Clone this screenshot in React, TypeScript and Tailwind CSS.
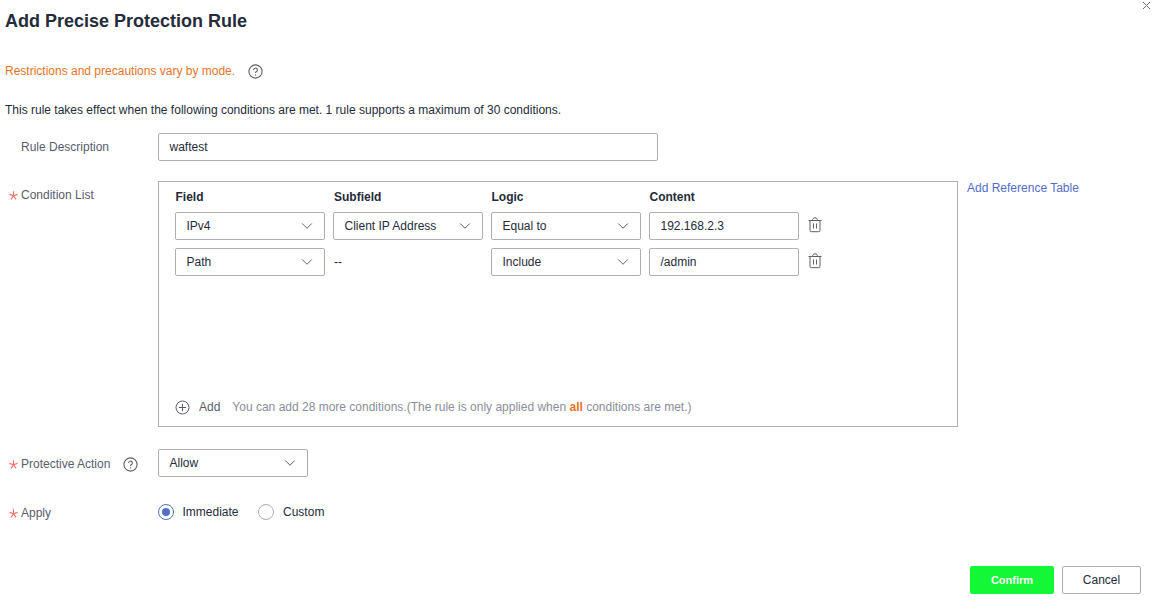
import { ChevronDown } from 'lucide-react';

const fieldBorder = 'border border-[#adb0b8] rounded-[2px] bg-white';

function HelpIcon() {
  return (
    <svg width="15" height="15" viewBox="0 0 15 15" fill="none" className="shrink-0">
      <circle cx="7.5" cy="7.5" r="6.6" stroke="#5e6066" strokeWidth="1.1" />
      <path d="M5.6 6a1.9 1.9 0 1 1 2.9 1.6c-.7.4-1 .7-1 1.4" stroke="#5e6066" strokeWidth="1.1" />
      <circle cx="7.5" cy="10.9" r="0.7" fill="#5e6066" />
    </svg>
  );
}

function TrashIcon() {
  return (
    <svg width="14" height="16" viewBox="0 0 14 16" fill="none" stroke="#5e6066" strokeWidth="1">
      <path d="M.5 3.5h13M4.5 3.5c0-1.6 1-2.7 2.5-2.7s2.500 1.100 2.500 2.700M2 3.500v10a1.200 1.200 0 0 0 1.200 1.200h7.600A1.200 1.200 0 0 0 12 13.500v-10M5.500 6.500v5M8.500 6.500v5" />
    </svg>
  );
}

function Star() {
  return (
    <svg width="9" height="9" viewBox="0 0 8 8" className="mr-[3px] mt-[1px] shrink-0" stroke="#f66f6a" strokeWidth="1">
      <path d="M4 .3V4.300M4 4.300L.4 3M4 4.300L7.600 3M4 4.300L1.700 7.500M4 4.300L6.300 7.500" fill="none" />
    </svg>
  );
}

function Select({ value, width }: { value: string; width: string }) {
  return (
    <div className={`flex h-[28px] items-center justify-between pl-[10.5px] pr-[8px] ${fieldBorder} ${width}`}>
      <span>{value}</span>
      <ChevronDown size={18} strokeWidth={1.2} color="#4d4f55" />
    </div>
  );
}

function ConditionRow({ field, subfield, logic, content }: { field: string; subfield?: string; logic: string; content: string }) {
  return (
    <div className="flex items-center gap-[8px] text-[#252b3a]">
      <Select value={field} width="w-[150px]" />
      {subfield ? (
        <Select value={subfield} width="w-[150px]" />
      ) : (
        <span className="w-[150px] pl-[1px]">--</span>
      )}
      <Select value={logic} width="w-[150px]" />
      <div className={`flex h-[28px] w-[150px] items-center pl-[10.5px] ${fieldBorder}`}>{content}</div>
      <div className="-mt-[3px] ml-[1px] flex">
        <TrashIcon />
      </div>
    </div>
  );
}

export default function App() {
  return (
    <div className="relative h-[600px] w-[1153px] overflow-hidden bg-white font-['Liberation_Sans',Arial,sans-serif] text-[12px] text-[#252b3a]">
      <svg width="9" height="9" viewBox="0 0 9 9" className="absolute right-[2px] top-[1px]" stroke="#6c6f78" strokeWidth="1">
        <path d="M1 1l7 7M8 1L1 8" />
      </svg>

      <div className="flex h-[42px] items-center pl-[5px]">
        <h1 className="text-[18px] font-bold text-[#252b3a]">Add Precise Protection Rule</h1>
      </div>

      <div className="mt-[20px] flex h-[18px] items-center pl-[5px]">
        <span className="text-[#e8731f]">Restrictions and precautions vary by mode.</span>
        <span className="ml-[13px]"><HelpIcon /></span>
      </div>

      <p className="mt-[21px] h-[18px] pl-[5px] leading-[18px]">
        This rule takes effect when the following conditions are met. 1 rule supports a maximum of 30 conditions.
      </p>

      <div className="mt-[14px] flex items-center">
        <label className="w-[158px] pl-[21px] text-[#575d6c]">Rule Description</label>
        <div className={`flex h-[28px] w-[500px] items-center pl-[10.5px] ${fieldBorder}`}>waftest</div>
      </div>

      <div className="mt-[20px] flex items-start">
        <label className="flex w-[158px] items-center pl-[9px] pt-[5px] text-[#575d6c]">
          <Star />
          Condition List
        </label>
        <div className="flex h-[246px] w-[800px] flex-col border border-[#adb0b8] pl-[16px]">
          <div className="flex h-[30px] items-center gap-[8px] font-bold">
            <span className="w-[150px] pl-[0.5px]">Field</span>
            <span className="w-[150px] pl-[1px]">Subfield</span>
            <span className="w-[150px] pl-[0.5px]">Logic</span>
            <span className="w-[150px] pl-[0.5px]">Content</span>
          </div>
          <div className="flex flex-col gap-[8px]">
            <ConditionRow field="IPv4" subfield="Client IP Address" logic="Equal to" content="192.168.2.3" />
            <ConditionRow field="Path" logic="Include" content="/admin" />
          </div>
          <div className="mt-auto mb-[10px] flex items-center">
            <svg width="15" height="15" viewBox="0 0 15 15" fill="none" stroke="#5e6066" strokeWidth="1">
              <circle cx="7.5" cy="7.5" r="6.5" />
              <path d="M7.500 3.800v7.400M3.800 7.500h7.400" />
            </svg>
            <span className="ml-[9px] text-[#575d6c]">Add</span>
            <span className="ml-[12px] text-[#8a8e99]">
              You can add 28 more conditions.(The rule is only applied when <span className="font-bold text-[#e8731f]">all</span> conditions are met.)
            </span>
          </div>
        </div>
        <a className="ml-[9px] leading-[14px] text-[#526ecc]">Add Reference Table</a>
      </div>

      <div className="mt-[22px] flex items-center">
        <label className="flex w-[158px] items-center pl-[9px] pt-[2px] text-[#575d6c]">
          <Star />
          Protective Action
          <span className="ml-[13px]"><HelpIcon /></span>
        </label>
        <Select value="Allow" width="w-[150px]" />
      </div>

      <div className="mt-[24px] flex items-center">
        <label className="flex w-[158px] items-center pl-[9px] pt-[3px] text-[#575d6c]">
          <Star />
          Apply
        </label>
        <div className="flex items-center">
          <span className="flex h-[16px] w-[16px] items-center justify-center rounded-full border border-[#526ecc]">
            <span className="h-[8px] w-[8px] rounded-full bg-[#526ecc]" />
          </span>
          <span className="ml-[8.5px]">Immediate</span>
          <span className="ml-[19.5px] h-[16px] w-[16px] rounded-full border border-[#adb0b8]" />
          <span className="ml-[9px]">Custom</span>
        </div>
      </div>

      <div className="mt-[44px] flex justify-end gap-[8px] pr-[12px]">
        <button className="h-[28px] w-[84px] rounded-[2px] bg-[#14f736] text-[11px] font-bold text-white">Confirm</button>
        <button className="h-[28px] w-[79px] rounded-[2px] border border-[#adb0b8] bg-white">Cancel</button>
      </div>
    </div>
  );
}
